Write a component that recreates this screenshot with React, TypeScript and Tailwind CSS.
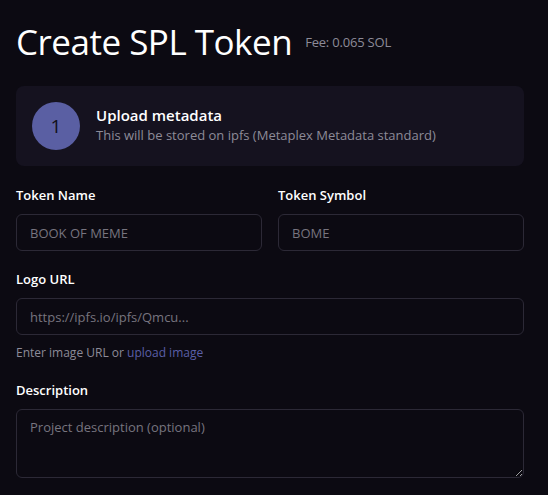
export default function App() {
  return (
    <div
      className="min-h-screen bg-[#0c0a12] pl-4 pr-6 pt-[22px] text-white"
      style={{ fontFamily: '"Open Sans", "Noto Sans", sans-serif' }}
    >
      <div className="flex items-start gap-[13px]">
        <h1 className="text-[35px] leading-10 font-normal tracking-[-0.5px]">Create SPL Token</h1>
        <span className="mt-[11px] text-[13px] text-[#8d8b98] tracking-[-0.2px]">Fee: 0.065 SOL</span>
      </div>

      <div className="mt-[24px] flex items-center gap-4 rounded-lg bg-[#15121f] px-4 py-4">
        <div className="flex h-12 w-12 shrink-0 items-center justify-center rounded-full bg-[#5a5fa3] text-[19px] text-[#111018]">
          1
        </div>
        <div className="-mt-[2px]">
          <div className="text-[15px] leading-5 font-semibold">Upload metadata</div>
          <div className="text-[13px] leading-5 text-[#8d8b98]">This will be stored on ipfs (Metaplex Metadata standard)</div>
        </div>
      </div>

      <div className="mt-[19px] grid grid-cols-2 gap-4">
        <Field label="Token Name" placeholder="BOOK OF MEME" />
        <Field label="Token Symbol" placeholder="BOME" />
      </div>

      <div className="mt-[18px]">
        <Field label="Logo URL" placeholder="https://ipfs.io/ipfs/Qmcu..." />
        <p className="mt-[10px] text-[12px] leading-4 text-[#8d8b98]">
          Enter image URL or <a href="#" className="text-[#5b5fa8]">upload image</a>
        </p>
      </div>

      <div className="mt-[19px]">
        <label className="block text-[13px] leading-5 font-semibold">Description</label>
        <textarea
          placeholder="Project description (optional)"
          className="mt-[9px] block h-[69px] w-full rounded-md border border-[#2c2936] bg-[#0c0a12] px-[13px] py-2 text-[13px] text-white placeholder:text-[#77747f] outline-none"
        />
      </div>
    </div>
  );
}

function Field({ label, placeholder }: { label: string; placeholder: string }) {
  return (
    <div>
      <label className="block text-[13px] leading-5 font-semibold">{label}</label>
      <input
        placeholder={placeholder}
        className="mt-[9px] block h-[37px] w-full rounded-md border border-[#2c2936] bg-[#0c0a12] px-[13px] text-[13px] text-white placeholder:text-[#77747f] outline-none"
      />
    </div>
  );
}
